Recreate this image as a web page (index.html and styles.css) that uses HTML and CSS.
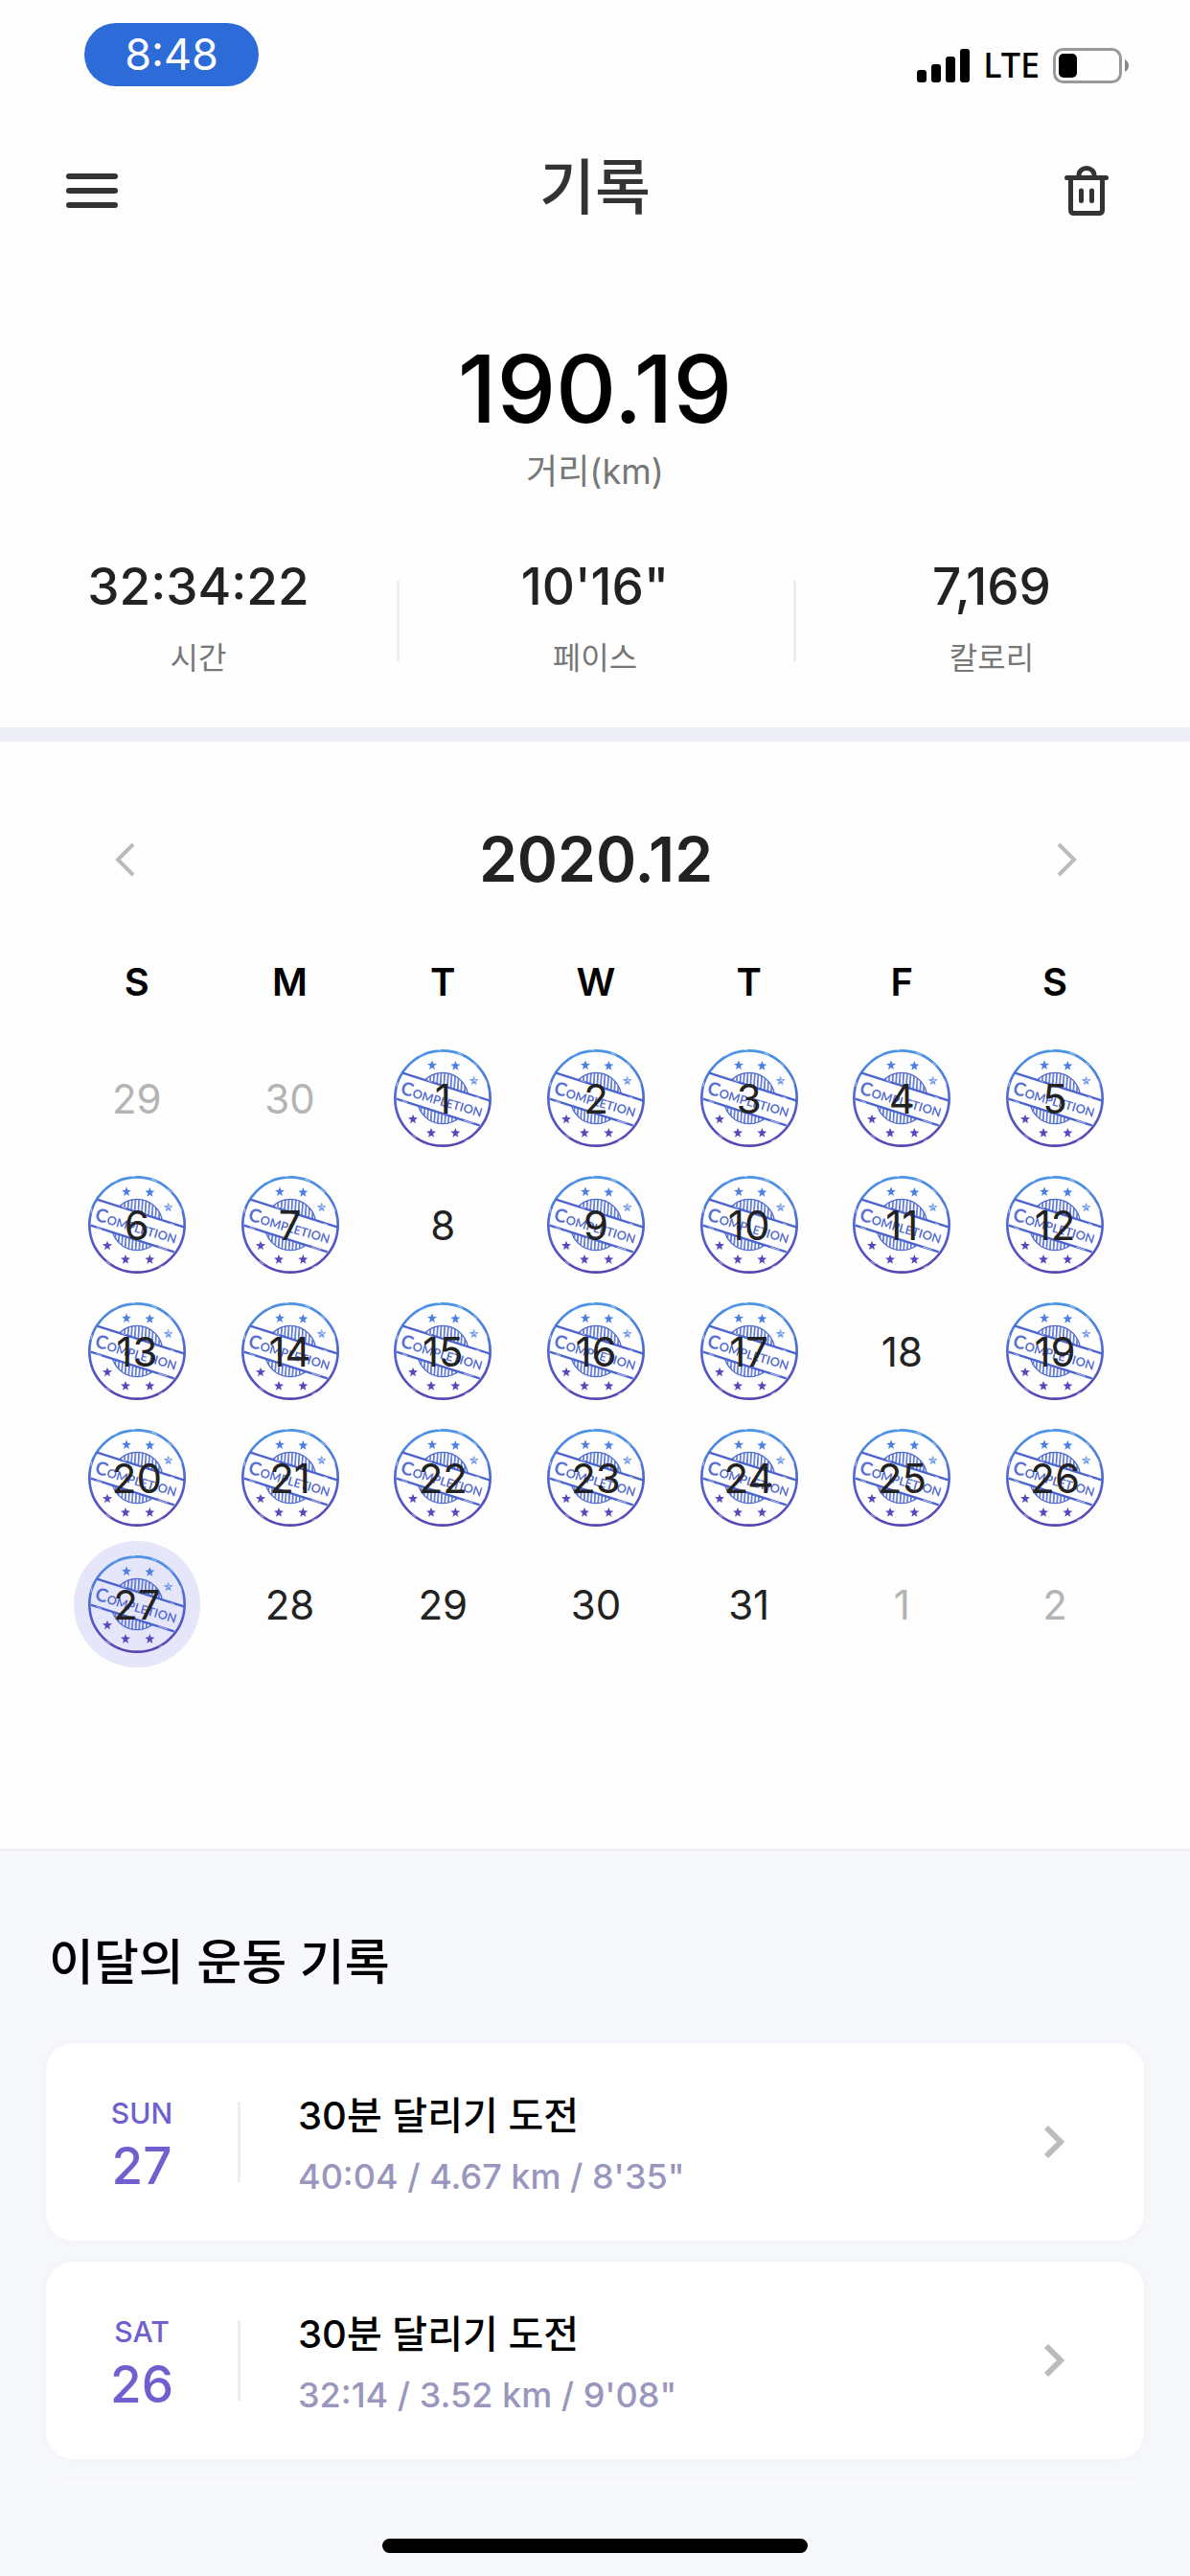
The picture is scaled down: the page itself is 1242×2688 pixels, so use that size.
FILE: index.html
```html
<!DOCTYPE html>
<html lang="ko">
<head>
    <meta charset="UTF-8">
    <meta name="viewport" content="width=device-width, initial-scale=1.0">
    <title>기록</title>
    <link rel="stylesheet" href="styles.css">
</head>
<body>
    <!-- Completion stamp, reused by every finished day -->
    <svg class="defs" aria-hidden="true">
        <defs>
            <linearGradient id="ink" gradientUnits="userSpaceOnUse" x1="0" y1="0" x2="0" y2="312">
                <stop offset="0" stop-color="#4a96e8"/>
                <stop offset="0.45" stop-color="#4f6cd4"/>
                <stop offset="1" stop-color="#5a40b0"/>
            </linearGradient>
            <pattern id="hatch" width="11" height="11" patternUnits="userSpaceOnUse" patternTransform="rotate(4)">
                <rect width="5" height="11" fill="#5a74d6"/>
            </pattern>
            <clipPath id="outside-band">
                <path d="M0 0H312V166L0 67ZM0 155L312 254V312H0Z"/>
            </clipPath>
            <mask id="wear" maskUnits="userSpaceOnUse" x="0" y="0" width="312" height="312">
                <rect width="312" height="312" fill="#fff"/>
                <g stroke="#000" stroke-opacity="0.6" stroke-width="3" stroke-linecap="round">
                    <path d="M82 22l12-6M203 13l14 7M254 45l10 9M290 98l6 14M60 271l12 8M226 290l10-5M12 118l2-12M140 4l9 2"/>
                    <path d="M224 226l26 8M30 164l14 6M108 99l12 5M262 152l9 3M252 94l10 10M246 104l14-5M206 146l8 3"/>
                </g>
            </mask>
            <path id="star" d="M0-15L4-5L15-4L6 3L9 14L0 8L-9 14L-6 3L-15-4L-4-5Z"/>
            <symbol id="stamp" viewBox="0 0 312 312">
                <g mask="url(#wear)">
                    <g clip-path="url(#outside-band)">
                        <circle cx="156" cy="156" r="80" fill="url(#hatch)" stroke="#4c68d0" stroke-width="4"/>
                    </g>
                    <circle cx="156" cy="156" r="149" fill="none" stroke="url(#ink)" stroke-width="8"/>
                    <path d="M31 77L305 164M11 158L272 241" fill="none" stroke="#4a63cf" stroke-width="7"/>
                    <g fill="#4c80e2">
                        <use href="#star" x="123" y="52"/>
                        <use href="#star" x="196" y="54"/>
                        <use href="#star" x="254" y="101" opacity="0.8"/>
                    </g>
                    <g fill="#5549bd">
                        <use href="#star" x="63" y="221"/>
                        <use href="#star" x="120" y="264"/>
                        <use href="#star" x="196" y="264"/>
                    </g>
                    <text class="stamp-text" transform="translate(22 142) rotate(16)"><tspan class="stamp-cap">C</tspan>OMPLETION</text>
                </g>
            </symbol>
        </defs>
    </svg>

    <div id="app">
        <div class="status-bar">
            <span class="clock">8:48</span>
            <div class="status-icons">
                <svg class="signal" viewBox="0 0 55 35" aria-hidden="true">
                    <rect x="0" y="22" width="10" height="13" rx="3"/>
                    <rect x="15" y="16" width="10" height="19" rx="3"/>
                    <rect x="30" y="8" width="10" height="27" rx="3"/>
                    <rect x="45" y="0" width="10" height="35" rx="3"/>
                </svg>
                <span class="network">LTE</span>
                <svg class="battery" viewBox="0 0 80 37" aria-hidden="true">
                    <rect x="1.5" y="1.5" width="69" height="34" rx="9" fill="none" stroke="#999" stroke-width="3"/>
                    <rect x="6" y="6" width="19" height="25" rx="5"/>
                    <path d="M75 12q4 2 4 6.500t-4 6.500z" fill="#888"/>
                </svg>
            </div>
        </div>

        <header class="top-bar">
            <button class="icon-btn" aria-label="메뉴">
                <svg width="54" height="36" viewBox="0 0 54 36">
                    <path d="M3 3H51M3 18H51M3 33H51" stroke="#333" stroke-width="6" stroke-linecap="round"/>
                </svg>
            </button>
            <h1>기록</h1>
            <button class="icon-btn" aria-label="삭제">
                <svg width="46" height="52" viewBox="0 0 46 52" fill="none" stroke="#333" stroke-linecap="round">
                    <path d="M2.500 12.500H43.500" stroke-width="5"/>
                    <path d="M15 12V9.500a8 7 0 0 1 16 0V12" stroke-width="5"/>
                    <path d="M6.500 14V46q0 3.500 3.500 3.500H36q3.500 0 3.500-3.500V14" stroke-width="5"/>
                    <path d="M17.500 26V36.500M28.500 26V36.500" stroke-width="5"/>
                </svg>
            </button>
        </header>

        <section class="summary">
            <p class="distance">190.19</p>
            <p class="distance-label">거리(km)</p>
            <div class="stats">
                <div class="stat">
                    <strong>32:34:22</strong>
                    <span>시간</span>
                </div>
                <div class="stat">
                    <strong>10'16"</strong>
                    <span>페이스</span>
                </div>
                <div class="stat">
                    <strong>7,169</strong>
                    <span>칼로리</span>
                </div>
            </div>
        </section>

        <section class="calendar">
            <div class="month-nav">
                <button class="icon-btn" aria-label="이전 달">
                    <svg width="21" height="36" viewBox="0 0 21 36">
                        <path d="M19 2L3 18L19 34" fill="none" stroke="#bbb" stroke-width="4"/>
                    </svg>
                </button>
                <h2>2020.12</h2>
                <button class="icon-btn" aria-label="다음 달">
                    <svg width="21" height="36" viewBox="0 0 21 36">
                        <path d="M2 2L18 18L2 34" fill="none" stroke="#bbb" stroke-width="4"/>
                    </svg>
                </button>
            </div>
            <table>
                <thead>
                    <tr><th>S</th><th>M</th><th>T</th><th>W</th><th>T</th><th>F</th><th>S</th></tr>
                </thead>
                <tbody id="days"></tbody>
            </table>
        </section>

        <section class="records">
            <h2>이달의 운동 기록</h2>
            <div class="record-list">
                <a class="record" href="#27">
                    <div class="record-date">
                        <span>SUN</span>
                        <strong>27</strong>
                    </div>
                    <div class="record-info">
                        <h3>30분 달리기 도전</h3>
                        <p>40:04 / 4.67 km / 8'35"</p>
                    </div>
                    <svg width="24" height="36" viewBox="0 0 24 36" aria-hidden="true">
                        <path d="M4 3L19 18L4 33" fill="none" stroke="#bbb" stroke-width="6"/>
                    </svg>
                </a>
                <a class="record" href="#26">
                    <div class="record-date">
                        <span>SAT</span>
                        <strong>26</strong>
                    </div>
                    <div class="record-info">
                        <h3>30분 달리기 도전</h3>
                        <p>32:14 / 3.52 km / 9'08"</p>
                    </div>
                    <svg width="24" height="36" viewBox="0 0 24 36" aria-hidden="true">
                        <path d="M4 3L19 18L4 33" fill="none" stroke="#bbb" stroke-width="6"/>
                    </svg>
                </a>
            </div>
        </section>

        <footer class="home-area">
            <div class="home-bar"></div>
        </footer>
    </div>

    <script>
        const daysBody = document.getElementById('days');
        const year = 2020;
        const month = 11;
        const selectedDay = 27;
        const restDays = [8, 18];

        // 달력 그리기
        function renderCalendar() {
            const date = new Date(year, month, 1);
            date.setDate(1 - date.getDay());

            for (let week = 0; week < 5; week++) {
                const row = document.createElement('tr');
                for (let i = 0; i < 7; i++) {
                    row.appendChild(createDay(date));
                    date.setDate(date.getDate() + 1);
                }
                daysBody.appendChild(row);
            }
        }

        function createDay(date) {
            const cell = document.createElement('td');
            const button = document.createElement('button');
            const day = date.getDate();
            const inMonth = date.getMonth() === month;
            button.className = 'day';

            if (!inMonth) {
                button.classList.add('other-month');
            } else if (day <= selectedDay && !restDays.includes(day)) {
                button.innerHTML = '<svg class="stamp" aria-hidden="true"><use href="#stamp"/></svg>';
            }
            if (inMonth && day === selectedDay) {
                button.classList.add('selected');
            }

            const label = document.createElement('span');
            label.textContent = day;
            button.appendChild(label);
            cell.appendChild(button);
            return cell;
        }

        renderCalendar();
    </script>
</body>
</html>
```
FILE: styles.css
```css
* {
    margin: 0;
    padding: 0;
    box-sizing: border-box;
}

body {
    font-family: 'Inter', 'Noto Sans CJK KR', sans-serif;
    background-color: #fefefe;
    color: #222;
}

button {
    background: none;
    border: none;
    font: inherit;
    color: inherit;
    cursor: pointer;
}

svg {
    display: block;
}

.defs {
    position: absolute;
    width: 0;
    height: 0;
}

#app {
    display: flex;
    flex-direction: column;
    min-height: 100vh;
}

/* Status bar */
.status-bar {
    display: flex;
    justify-content: space-between;
    align-items: flex-start;
    padding: 24px 63px 0 88px;
}

.clock {
    width: 182px;
    border-radius: 33px;
    background-color: #2d6bd8;
    color: #fff;
    font-size: 45px;
    line-height: 66px;
    text-align: center;
}

.status-icons {
    display: flex;
    align-items: center;
    gap: 14px;
    padding-top: 24px;
}

.signal {
    width: 55px;
    height: 35px;
}

.battery {
    width: 80px;
    height: 37px;
}

.network {
    font-family: 'Noto Sans', sans-serif;
    font-size: 36px;
    font-weight: 500;
    line-height: 40px;
    color: #000;
}

/* Top bar */
.top-bar {
    display: grid;
    grid-template-columns: 1fr auto 1fr;
    align-items: end;
    padding: 73px 85px 0 69px;
}

.top-bar h1 {
    padding-left: 16px;
    font-size: 63px;
    font-weight: 500;
    line-height: 64px;
    color: #333;
}

.top-bar .icon-btn:last-child {
    justify-self: end;
}

.icon-btn {
    display: flex;
    align-items: center;
    height: 56px;
}

/* Summary */
.summary {
    padding: 131px 0 52px;
    border-bottom: 15px solid #eeeff6;
    text-align: center;
}

.distance {
    font-size: 98px;
    font-weight: 500;
    line-height: 96px;
    color: #000;
}

.distance-label {
    margin-top: 14px;
    font-size: 36px;
    line-height: 48px;
    color: #777;
}

.stats {
    display: grid;
    grid-template-columns: repeat(3, 1fr);
    margin-top: 66px;
}

.stat {
    position: relative;
    display: flex;
    flex-direction: column;
    gap: 25px;
}

.stat + .stat::before {
    content: '';
    position: absolute;
    left: 0;
    top: 24px;
    width: 3px;
    height: 84px;
    background-color: #eee;
}

.stat strong {
    font-size: 53px;
    font-weight: 500;
    line-height: 60px;
}

.stat span {
    font-size: 32px;
    line-height: 40px;
    color: #777;
}

/* Calendar */
.calendar {
    padding: 85px 61px 189px 63px;
}

.month-nav {
    display: flex;
    justify-content: space-between;
    align-items: center;
    padding: 0 57px;
    margin-bottom: 33px;
}

.month-nav h2 {
    font-size: 64px;
    font-weight: 600;
    line-height: 76px;
}

.calendar table {
    width: 100%;
    table-layout: fixed;
    border-collapse: collapse;
}

.calendar th {
    height: 112px;
    font-size: 40px;
    font-weight: 600;
    color: #000;
}

.day {
    position: relative;
    display: flex;
    justify-content: center;
    align-items: center;
    width: 132px;
    height: 132px;
    margin: 0 auto;
    border-radius: 50%;
    font-size: 42px;
}

.day span {
    position: relative;
}

.other-month {
    color: #b4b4b4;
}

.selected {
    background-color: #e6e6fa;
}

.stamp {
    position: absolute;
    inset: 14px;
    width: 104px;
    height: 104px;
}

.stamp-text {
    font-family: 'Lato', sans-serif;
    font-size: 38px;
    font-weight: 700;
    fill: #5a70d2;
}

.stamp-cap {
    font-size: 58px;
}

/* Records */
.records {
    flex: 1;
    border-top: 3px solid #efeff5;
    background-color: #f7f8fc;
    padding-top: 84px;
}

.records h2 {
    padding: 0 51px;
    margin-bottom: 32px;
    font-size: 51px;
    font-weight: 500;
    line-height: 64px;
    color: #000;
}

.record-list {
    display: flex;
    flex-direction: column;
    gap: 22px;
    padding: 20px 48px 0;
}

.record-list::after {
    content: '';
    height: 6px;
    margin: -8px 12px 0;
    background: linear-gradient(transparent, rgba(60, 50, 110, 0.02));
}

.record {
    display: flex;
    align-items: center;
    min-height: 206px;
    padding-right: 82px;
    border-radius: 28px;
    background-color: #fff;
    box-shadow: 0 0 16px rgba(60, 50, 110, 0.03);
    color: #000;
    text-decoration: none;
}

.record-date {
    display: flex;
    flex-direction: column;
    gap: 7px;
    width: 200px;
    padding-top: 7px;
    text-align: center;
    color: #7060cf;
}

.record-date span {
    font-size: 30px;
    font-weight: 500;
    line-height: 36px;
}

.record-date strong {
    font-size: 53px;
    font-weight: 500;
    line-height: 60px;
}

.record-info {
    position: relative;
    flex: 1;
    padding: 7px 0 0 63px;
}

.record-info::before {
    content: '';
    position: absolute;
    left: 0;
    top: 16px;
    width: 3px;
    height: 84px;
    background-color: #eee;
}

.record-info h3 {
    margin-bottom: 17px;
    font-size: 40px;
    font-weight: 500;
    line-height: 48px;
}

.record-info p {
    font-size: 36px;
    font-weight: 500;
    line-height: 44px;
    color: #9a96bd;
}

/* Home indicator */
.home-area {
    padding: 63px 0 24px;
    background-color: #f7f8fc;
}

.home-bar {
    width: 444px;
    height: 15px;
    margin: 0 auto;
    border-radius: 8px;
    background-color: #000;
}
```
